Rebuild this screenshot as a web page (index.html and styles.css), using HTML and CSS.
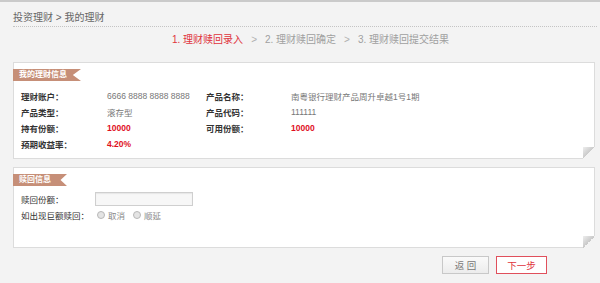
FILE: index.html
```html
<!DOCTYPE html>
<html lang="zh-CN">
<head>
    <meta charset="UTF-8">
    <title>我的理财 - 理财赎回</title>
    <link rel="stylesheet" href="styles.css">
</head>
<body>
    <div class="breadcrumb">投资理财 &gt; 我的理财</div>

    <div class="steps">
        <span class="step active">1. 理财赎回录入</span>
        <span class="sep">&gt;</span>
        <span class="step">2. 理财赎回确定</span>
        <span class="sep">&gt;</span>
        <span class="step">3. 理财赎回提交结果</span>
    </div>

    <!-- 我的理财信息 -->
    <div class="card card-info">
        <div class="ribbon">我的理财信息</div>
        <div class="info-grid">
            <span class="label">理财账户：</span>
            <span class="value">6666 8888 8888 8888</span>
            <span class="label">产品名称：</span>
            <span class="value">南粤银行理财产品周升卓越1号1期</span>

            <span class="label">产品类型：</span>
            <span class="value">滚存型</span>
            <span class="label">产品代码：</span>
            <span class="value">111111</span>

            <span class="label">持有份额：</span>
            <span class="value red">10000</span>
            <span class="label">可用份额：</span>
            <span class="value red">10000</span>

            <span class="label">预期收益率：</span>
            <span class="value red">4.20%</span>
        </div>
    </div>

    <!-- 赎回信息 -->
    <div class="card card-form">
        <div class="ribbon ribbon-short">赎回信息</div>
        <div class="form-grid">
            <label class="form-label" for="shares">赎回份额：</label>
            <input type="text" id="shares" class="text-input">

            <span class="form-label">如出现巨额赎回：</span>
            <div class="radios">
                <label class="radio"><span class="dot"></span>取消</label>
                <label class="radio"><span class="dot"></span>顺延</label>
            </div>
        </div>
    </div>

    <div class="actions">
        <button class="btn btn-back">返 回</button>
        <button class="btn btn-next">下一步</button>
    </div>
</body>
</html>
```

FILE: styles.css
```css
* {
    margin: 0;
    padding: 0;
    box-sizing: border-box;
}

body {
    font-family: "Liberation Sans", "Noto Sans CJK SC", sans-serif;
    font-size: 8.5px;
    color: #333;
    background: #f3f3f3;
    border-top: 2px solid #cacaca;
    min-height: 100vh;
}

.breadcrumb {
    margin: 0 3px 0 13px;
    padding: 10px 0 2px;
    font-size: 10px;
    line-height: 12px;
    color: #666;
    border-bottom: 1px dotted #c4c4c4;
}

.steps {
    display: flex;
    align-items: flex-start;
    gap: 8px;
    padding: 7px 0 0 172px;
    height: 35px;
    font-size: 10px;
    line-height: 12px;
    color: #a0a0a0;
}

.step.active {
    color: #e0323c;
}

.sep {
    color: #b0b0b0;
}

.card {
    position: relative;
    background: #fff;
    border: 1px solid #dcdcdc;
    margin: 0 5px 0 13px;
}

/* folded corner */
.card::after {
    content: "";
    position: absolute;
    right: -1px;
    bottom: -1px;
    width: 12px;
    height: 12px;
    background: linear-gradient(to top left, #f3f3f3 50%, #c9c9c9 50%, #eeeeee 100%);
}

.card-info {
    height: 97px;
}

.card-form {
    margin-top: 8px;
    height: 81px;
}

.ribbon {
    margin: 6px 0 0 -1px;
    width: 68px;
    height: 12px;
    line-height: 12px;
    padding-left: 6px;
    background: #c68f78;
    color: #fff;
    font-size: 8px;
    font-weight: bold;
    clip-path: polygon(0 0, 100% 0, 88% 50%, 100% 100%, 0 100%);
}

.ribbon-short {
    width: 54px;
}

.info-grid {
    display: grid;
    grid-template-columns: 86px 99px 85px 1fr;
    grid-auto-rows: 16px;
    align-items: center;
    padding: 7px 0 0 7px;
}

.label {
    font-weight: bold;
    color: #333;
}

.value {
    color: #777;
}

.value.red {
    color: #e0101e;
    font-weight: bold;
}

.form-grid {
    display: grid;
    grid-template-columns: 74px 1fr;
    grid-auto-rows: 16px;
    align-items: center;
    padding: 5px 0 0 7px;
}

.form-label {
    color: #333;
}

.text-input {
    width: 98px;
    height: 14px;
    border: 1px solid #cfcfcf;
    background: #f7f7f7;
    box-shadow: inset 0 1px 1px #e6e6e6;
}

.radios {
    display: flex;
    gap: 8px;
    padding-left: 2px;
    color: #888;
}

.radio {
    display: flex;
    align-items: center;
    gap: 3px;
}

.dot {
    display: inline-block;
    width: 8px;
    height: 8px;
    border-radius: 50%;
    border: 1px solid #b8b8b8;
    background: #e4e4e4;
}

.actions {
    display: flex;
    justify-content: flex-end;
    gap: 7px;
    margin: 8px 53px 0 0;
}

.btn {
    height: 18px;
    font-family: inherit;
    font-size: 9.5px;
    cursor: pointer;
    background: #fff;
}

.btn-back {
    width: 47px;
    color: #777;
    border: 1px solid #c8c8c8;
    background: linear-gradient(#fafafa, #ececec);
}

.btn-next {
    width: 51px;
    color: #e0323c;
    border: 1px solid #e0505c;
}
```
